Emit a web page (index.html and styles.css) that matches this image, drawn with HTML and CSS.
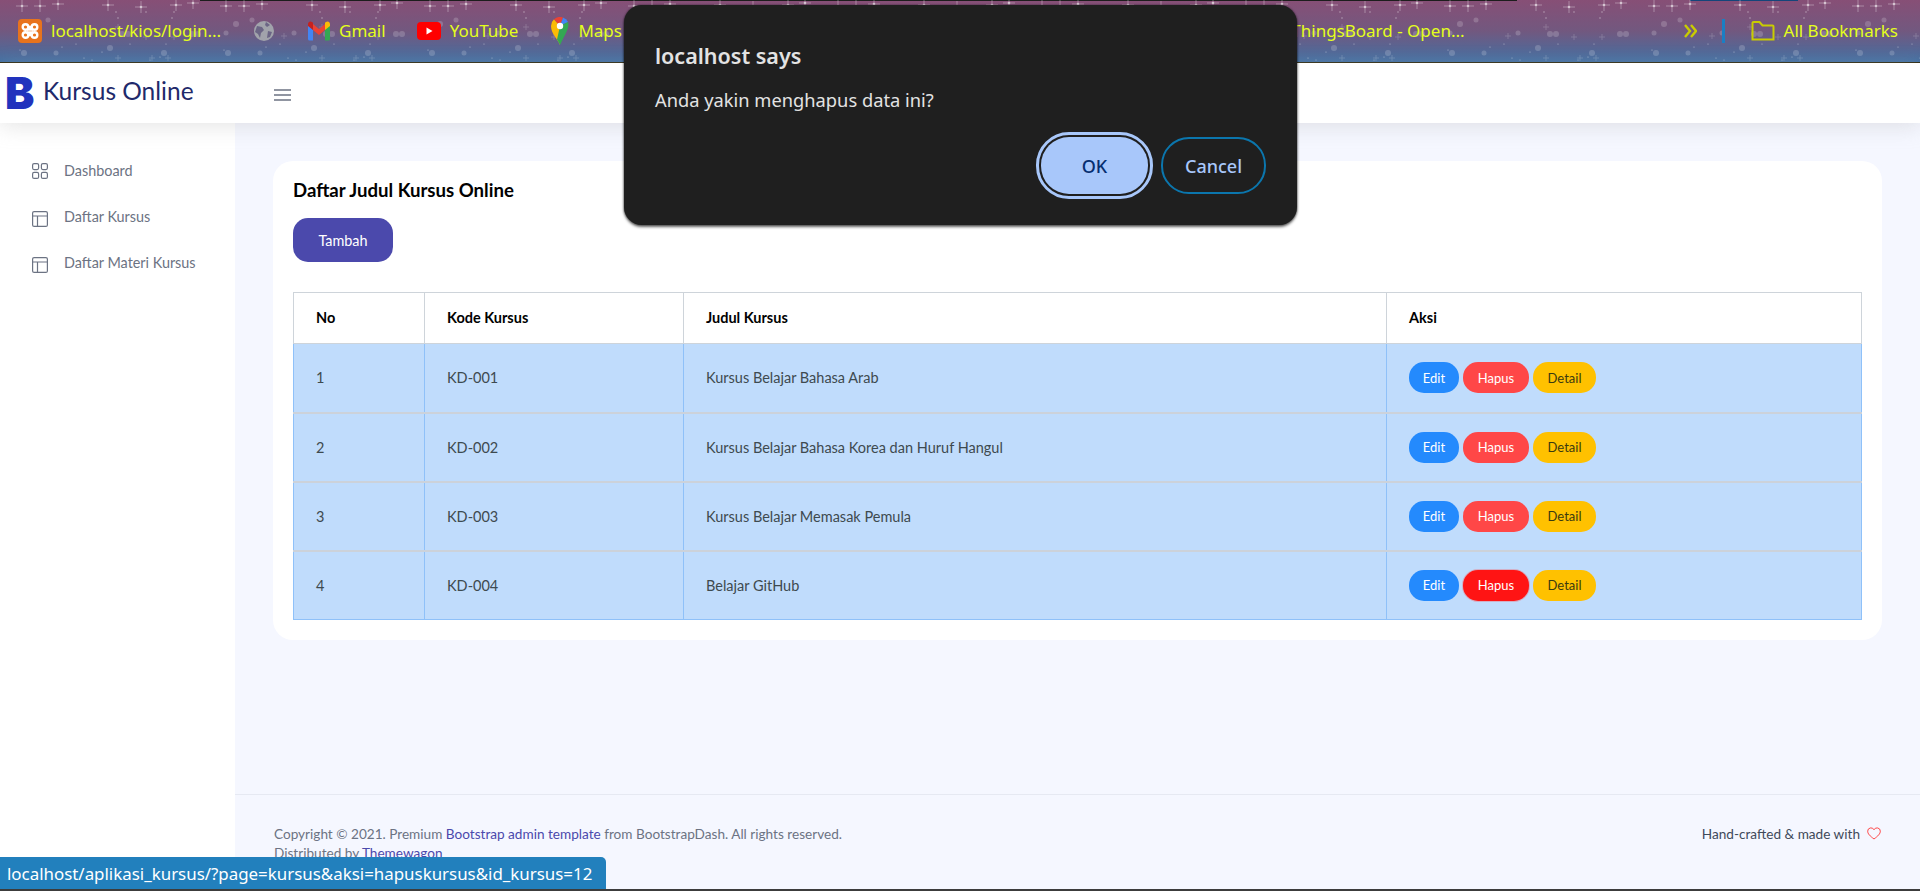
FILE: index.html
```html
<!DOCTYPE html>
<html lang="en">
<head>
    <meta charset="UTF-8">
    <title>Kursus Online</title>
    <link rel="stylesheet" href="styles.css">
</head>
<body>
    <!-- Browser bookmarks bar -->
    <div class="bookmarks">
        <svg class="stars" width="100%" height="62" aria-hidden="true">
            <defs>
                <g id="spark"><path d="M-6 0H6M0-6V6" stroke="#fff" stroke-width=".8" opacity=".4"/><circle r="1.3" fill="#fff" opacity=".55"/></g>
                <g id="plus"><path d="M-3 0H3M0-3V3" stroke="#fff" stroke-width=".8" opacity=".2"/></g>
                <pattern id="tile" width="204" height="62" patternUnits="userSpaceOnUse">
                    <use href="#spark" x="22" y="6"/><use href="#spark" x="40" y="6"/><use href="#spark" x="58" y="4"/>
                    <use href="#spark" x="108" y="5"/><use href="#spark" x="141" y="7"/><use href="#spark" x="176" y="5"/><use href="#spark" x="193" y="3"/>
                    <g fill="#fff" opacity=".5">
                        <circle cx="116" cy="12" r=".7"/><circle cx="146" cy="12" r=".7"/><circle cx="174" cy="12" r=".7"/><circle cx="118" cy="18" r=".7"/><circle cx="172" cy="18" r=".7"/>
                        <circle cx="20" cy="50" r=".6"/><circle cx="62" cy="47" r=".6"/><circle cx="76" cy="44" r=".6"/><circle cx="102" cy="52" r=".6"/><circle cx="130" cy="44" r=".6"/><circle cx="166" cy="44" r=".6"/>
                        <circle cx="84" cy="58" r=".6"/><circle cx="92" cy="60" r=".6"/><circle cx="150" cy="60" r=".6"/><circle cx="160" cy="57" r=".6"/>
                    </g>
                    <g fill="#fff" opacity=".18">
                        <circle cx="32" cy="24" r="3"/><circle cx="48" cy="20" r="2.5"/><circle cx="22" cy="33" r="2.5"/><circle cx="90" cy="33" r="2.5"/><circle cx="122" cy="34" r="3"/><circle cx="128" cy="34" r="3"/>
                        <circle cx="192" cy="34" r="3"/><circle cx="198" cy="34" r="3"/><circle cx="24" cy="53" r="3"/><circle cx="56" cy="53" r="2.5"/><circle cx="110" cy="48" r="3"/><circle cx="164" cy="53" r="3"/>
                    </g>
                    <use href="#plus" x="80" y="36"/><use href="#plus" x="146" y="37"/><use href="#plus" x="174" y="37"/><use href="#plus" x="118" y="27"/>
                    <use href="#plus" x="118" y="58"/><use href="#plus" x="152" y="58"/><use href="#plus" x="168" y="58"/>
                </pattern>
            </defs>
            <rect width="100%" height="62" fill="url(#tile)"/>
        </svg>
        <div class="bm bm-first">
            <svg class="bm-icon" width="24" height="24" viewBox="0 0 24 24"><rect width="24" height="24" rx="4" fill="#e8731d"/><g fill="none" stroke="#fff" stroke-width="2.400"><circle cx="7.500" cy="8" r="2.800"/><circle cx="16.500" cy="8" r="2.800"/><circle cx="7.500" cy="16" r="2.800"/><circle cx="16.500" cy="16" r="2.800"/><path d="M9 10.500h6M9 13.500h6M10 8h4M10 16h4"/></g></svg>
            <span>localhost/kios/login...</span>
        </div>
        <div class="bm bm-globe">
            <svg width="22" height="22" viewBox="0 0 22 22"><circle cx="11" cy="11" r="10" fill="#a1a3ab"/><path d="M4 6l5 1 2 3-3 3-1 5-2-4-3-2zM13 2l4 3-3 2-2-2zM15 11l4 1-2 5-3 1z" fill="#6b6585"/></svg>
        </div>
        <div class="bm bm-gmail">
            <svg class="bm-icon" width="22" height="20" viewBox="0 0 22 20"><path d="M0 3v15a1.500 1.500 0 0 0 1.500 1.500H5V9z" fill="#4285f4"/><path d="M22 3v15a1.500 1.500 0 0 1-1.500 1.500H17V9z" fill="#34a853"/><path d="M5 3l6 5 6-5v6l-6 5-6-5z" fill="#ea4335"/><path d="M0 3a2.500 2.500 0 0 1 4-2l1 .8V9L0 5z" fill="#c5221f"/><path d="M22 3a2.500 2.500 0 0 0-4-2l-1 .8V9l5-4z" fill="#fbbc04"/></svg>
            <span>Gmail</span>
        </div>
        <div class="bm bm-yt">
            <svg class="bm-icon" width="24" height="18" viewBox="0 0 24 18"><rect width="24" height="18" rx="4" fill="#f00"/><path d="M9.500 5.500l6 3.500-6 3.500z" fill="#fff"/></svg>
            <span>YouTube</span>
        </div>
        <div class="bm bm-maps">
            <svg class="bm-icon" width="18" height="28" viewBox="0 0 18 28"><path d="M9 28C7 22 0 17 0 9a9 9 0 0 1 3-6.700l6 7z" fill="#fbbc04"/><path d="M3 2.300A9 9 0 0 1 12 .5L9 9z" fill="#ea4335"/><path d="M12 .5A9 9 0 0 1 17 5l-8 4z" fill="#4285f4"/><path d="M17 5c1.500 5-1 9-8 23-.7-2-1.800-3.800-3-5.600L9 9z" fill="#34a853"/><circle cx="9" cy="9" r="3.200" fill="#fff"/></svg>
            <span>Maps</span>
        </div>
        <div class="bm bm-things"><span>ThingsBoard - Open...</span></div>
        <svg class="chevrons" width="13" height="14" viewBox="0 0 13 14"><path d="M1 1l5 6-5 6M7 1l5 6-5 6" fill="none" stroke="#c9cc00" stroke-width="2.400"/></svg>
        <div class="bm-divider"></div>
        <div class="bm bm-all">
            <svg class="bm-icon" width="24" height="20" viewBox="0 0 24 20"><path d="M1.500 18.500V2a1 1 0 0 1 1-1h6l3 3.500h10a1 1 0 0 1 1 1v13z" fill="none" stroke="#c9cc00" stroke-width="2"/></svg>
            <span>All Bookmarks</span>
        </div>
    </div>

    <!-- Top navbar -->
    <nav class="navbar">
        <div class="brand">
            <span class="brand-logo">B</span>
            <span class="brand-name">Kursus Online</span>
        </div>
        <svg class="hamburger" width="17" height="14" viewBox="0 0 17 14"><path d="M0 2h17M0 7h17M0 12h17" stroke="#6c7383" stroke-width="1.700"/></svg>
    </nav>

    <div class="page">
        <aside class="sidebar">
            <a class="side-link">
                <svg width="16" height="16" viewBox="0 0 16 16" fill="none" stroke="#6c7383" stroke-width="1.200"><rect x=".6" y=".6" width="6" height="6" rx="1.500"/><rect x="9.400" y=".6" width="6" height="6" rx="1.500"/><rect x=".6" y="9.400" width="6" height="6" rx="1.500"/><rect x="9.400" y="9.400" width="6" height="6" rx="1.500"/></svg>
                <span>Dashboard</span>
            </a>
            <a class="side-link">
                <svg class="icon-low" width="16" height="16" viewBox="0 0 16 16" fill="none" stroke="#6c7383" stroke-width="1.200"><rect x=".6" y=".6" width="14.800" height="14.800" rx="1.500"/><path d="M.6 5h14.800M5.500 5v10.400"/></svg>
                <span>Daftar Kursus</span>
            </a>
            <a class="side-link">
                <svg class="icon-low" width="16" height="16" viewBox="0 0 16 16" fill="none" stroke="#6c7383" stroke-width="1.200"><rect x=".6" y=".6" width="14.800" height="14.800" rx="1.500"/><path d="M.6 5h14.800M5.500 5v10.400"/></svg>
                <span>Daftar Materi Kursus</span>
            </a>
        </aside>

        <main class="main">
            <div class="content">
                <div class="card">
                    <h4 class="card-title">Daftar Judul Kursus Online</h4>
                    <button class="btn-tambah">Tambah</button>
                    <table class="data-table">
                        <colgroup>
                            <col class="col-no"><col class="col-kode"><col class="col-judul"><col>
                        </colgroup>
                        <thead>
                            <tr><th>No</th><th>Kode Kursus</th><th>Judul Kursus</th><th>Aksi</th></tr>
                        </thead>
                        <tbody>
                            <tr>
                                <td>1</td><td>KD-001</td><td>Kursus Belajar Bahasa Arab</td>
                                <td><div class="actions"><a class="pill pill-edit">Edit</a><a class="pill pill-hapus">Hapus</a><a class="pill pill-detail">Detail</a></div></td>
                            </tr>
                            <tr>
                                <td>2</td><td>KD-002</td><td>Kursus Belajar Bahasa Korea dan Huruf Hangul</td>
                                <td><div class="actions"><a class="pill pill-edit">Edit</a><a class="pill pill-hapus">Hapus</a><a class="pill pill-detail">Detail</a></div></td>
                            </tr>
                            <tr>
                                <td>3</td><td>KD-003</td><td>Kursus Belajar Memasak Pemula</td>
                                <td><div class="actions"><a class="pill pill-edit">Edit</a><a class="pill pill-hapus">Hapus</a><a class="pill pill-detail">Detail</a></div></td>
                            </tr>
                            <tr>
                                <td>4</td><td>KD-004</td><td>Belajar GitHub</td>
                                <td><div class="actions"><a class="pill pill-edit">Edit</a><a class="pill pill-hapus pill-hover">Hapus</a><a class="pill pill-detail">Detail</a></div></td>
                            </tr>
                        </tbody>
                    </table>
                </div>
            </div>

            <footer class="footer">
                <div class="copyright">
                    Copyright © 2021. Premium <a>Bootstrap admin template</a> from BootstrapDash. All rights reserved.<br>
                    Distributed by <a>Themewagon</a>
                </div>
                <div class="crafted">
                    Hand-crafted &amp; made with
                    <svg width="14" height="13" viewBox="0 0 14 13"><path d="M7 12C3 9 .7 6.800 .7 4.200A3.300 3.300 0 0 1 7 2.800a3.300 3.300 0 0 1 6.300 1.400C13.300 6.800 11 9 7 12z" fill="none" stroke="#ff4747" stroke-width="1"/></svg>
                </div>
            </footer>
        </main>
    </div>

    <!-- Browser confirm dialog -->
    <div class="dialog">
        <div class="dialog-title">localhost says</div>
        <div class="dialog-msg">Anda yakin menghapus data ini?</div>
        <div class="dialog-btns">
            <button class="dlg-ok">OK</button>
            <button class="dlg-cancel">Cancel</button>
        </div>
    </div>

    <!-- Link preview at bottom of the window -->
    <div class="status">localhost/aplikasi_kursus/?page=kursus&amp;aksi=hapuskursus&amp;id_kursus=12</div>
</body>
</html>
```

FILE: styles.css
```css
* {
    box-sizing: border-box;
}

body {
    margin: 0;
    height: 891px;
    overflow: hidden;
    display: flex;
    flex-direction: column;
    font-family: Lato, 'Open Sans', sans-serif;
    background-color: #f5f7ff;
    border-bottom: 2px solid #3c3c3c;
}

/* Browser bookmarks bar */
.bookmarks {
    height: 63px;
    flex-shrink: 0;
    display: flex;
    align-items: center;
    padding: 0 22px 1px 18px;
    background: linear-gradient(to bottom, #874f76, #72587f 50%, #4270a3);
    border-bottom: 1px solid #2e2a10;
    color: #e4ff1c;
    font-family: 'Noto Sans', sans-serif;
    font-size: 17px;
    position: relative;
}

/* bottom edge of the tab strip above */
.bookmarks::before {
    content: "";
    position: absolute;
    left: 0;
    top: 0;
    width: 100%;
    height: 1px;
    background: linear-gradient(to right, transparent 200px, #1d1d1d 200px, #1d1d1d 1517px, transparent 1517px, transparent 1690px, #14457a 1690px, #14457a 1798px, transparent 1798px);
}

.stars {
    position: absolute;
    left: 0;
    top: 0;
}

.bm {
    display: flex;
    align-items: center;
    position: relative;
    white-space: nowrap;
}

.bm-icon {
    margin-right: 9px;
    flex-shrink: 0;
}

.bm-globe {
    margin-left: 32px;
}

.bm-gmail {
    margin-left: 33px;
}

.bm-yt {
    margin-left: 31px;
}

.bm-maps {
    margin-left: 33px;
}

.bm-things {
    margin-left: auto;
}

.chevrons {
    margin-left: 219px;
    position: relative;
}

.bm-divider {
    width: 3px;
    height: 24px;
    margin-left: 25px;
    background-color: #1a7fc4;
    position: relative;
}

.bm-all {
    margin-left: 26px;
}

/* Navbar */
.navbar {
    height: 60px;
    flex-shrink: 0;
    display: flex;
    align-items: center;
    background-color: #fff;
    box-shadow: 0 4px 20px rgba(182, 182, 182, 0.35);
    position: relative;
}

.brand {
    width: 274px;
    display: flex;
    align-items: center;
    padding-left: 5px;
}

.brand-logo {
    font-family: Inter, sans-serif;
    font-weight: 900;
    font-size: 44px;
    line-height: 60px;
    width: 38px;
    color: #2133bd;
}

.brand-name {
    font-size: 24.5px;
    color: #1f2a6b;
    margin-top: -6px;
}

.hamburger {
    margin-top: 4px;
}

/* Sidebar and main area */
.page {
    flex: 1;
    display: flex;
    min-height: 0;
}

.sidebar {
    width: 235px;
    flex-shrink: 0;
    background-color: #fff;
    padding: 36px 0 0 32px;
}

.side-link {
    display: flex;
    align-items: center;
    gap: 16px;
    height: 22px;
    margin-bottom: 24px;
    font-size: 14.4px;
    color: #6c7383;
}

.side-link svg {
    flex-shrink: 0;
    margin-top: 2px;
}

.side-link .icon-low {
    margin-top: 6px;
}

.main {
    flex: 1;
    display: flex;
    flex-direction: column;
    min-width: 0;
}

.content {
    flex: 1;
    padding: 38px 38px 0 38px;
}

.card {
    background-color: #fff;
    border-radius: 20px;
    padding: 19px 20px 20px 20px;
}

.card-title {
    margin: 0 0 18px;
    font-size: 18.6px;
    line-height: 20px;
    font-weight: 700;
    color: #010101;
}

.btn-tambah {
    display: block;
    width: 100px;
    height: 44px;
    border: none;
    border-radius: 15px;
    background-color: #4b49ac;
    color: #fff;
    font-family: inherit;
    font-size: 14.4px;
    margin-bottom: 30px;
}

/* Table */
.data-table {
    width: 1569px;
    table-layout: fixed;
    border-collapse: collapse;
    font-size: 14.5px;
}

.col-no {
    width: 131px;
}

.col-kode {
    width: 259px;
}

.col-judul {
    width: 703px;
}

.data-table th {
    height: 51px;
    padding: 0 22px 1px;
    text-align: left;
    font-weight: 700;
    color: #010101;
    background-color: #fff;
    border: 1.5px solid #ced4da;
}

.data-table td {
    height: 69px;
    padding: 0 22px;
    color: #3e4a4f;
    background-color: #c0dcfc;
    border-left: 1px solid #8fc1f9;
    border-right: 1px solid #8fc1f9;
    border-bottom: 2px solid #ccd2da;
}

.data-table tbody tr:last-child td {
    border-bottom: 1.5px solid #8fc1f9;
}

.actions {
    display: flex;
    gap: 4px;
}

.pill {
    height: 31px;
    display: flex;
    align-items: center;
    justify-content: center;
    border-radius: 15px;
    font-size: 13px;
    color: #fff;
}

.pill-edit {
    width: 50px;
    background-color: #248afd;
}

.pill-hapus {
    width: 66px;
    background-color: #ff4747;
}

.pill-hover {
    background-color: #ff1414;
    box-shadow: 0 0 0 1px rgba(255, 71, 71, 0.3);
}

.pill-detail {
    width: 63px;
    background-color: #ffc100;
    color: #3a3a10;
}

/* Footer */
.footer {
    height: 95px;
    flex-shrink: 0;
    display: flex;
    justify-content: space-between;
    padding: 30px 39px 0 39px;
    border-top: 1px solid #e6e9f2;
    font-size: 13.6px;
    line-height: 19px;
    color: #6c7383;
}

.footer a {
    color: #4b49ac;
}

.crafted {
    display: flex;
    align-items: flex-start;
    gap: 7px;
    height: 19px;
    color: #3f4a5a;
}

.crafted svg {
    margin-top: 2px;
}

/* Browser confirm dialog */
.dialog {
    position: absolute;
    left: 624px;
    top: 5px;
    width: 673px;
    height: 220px;
    padding: 37px 31px 0;
    border-radius: 18px;
    background-color: #1f1f1f;
    box-shadow: 0 2px 3px rgba(0, 0, 0, 0.6), 0 0 2px rgba(0, 0, 0, 0.6);
    color: #e3e3e3;
    font-family: 'Noto Sans', sans-serif;
}

.dialog-title {
    font-size: 21.5px;
    line-height: 28px;
    font-weight: 600;
}

.dialog-msg {
    margin-top: 18px;
    font-size: 18.3px;
    line-height: 24px;
}

.dialog-btns {
    display: flex;
    justify-content: flex-end;
    align-items: center;
    gap: 13px;
    margin-top: 25px;
}

.dialog-btns button {
    font-family: inherit;
    font-size: 18px;
    font-weight: 500;
    border-radius: 28px;
}

.dlg-ok {
    width: 107px;
    height: 57px;
    border: none;
    background-color: #a8c7fa;
    color: #062e6f;
    outline: 3px solid #a8c7fa;
    outline-offset: 2px;
}

.dlg-cancel {
    width: 105px;
    height: 57px;
    border: 2px solid #0b76ad;
    background-color: transparent;
    color: #a8c7fa;
}

/* Status bubble */
.status {
    position: absolute;
    left: 0;
    top: 857px;
    width: 606px;
    height: 32px;
    padding: 2px 0 0 7px;
    border-top-right-radius: 5px;
    background-color: #2280bd;
    color: #fff;
    font-family: 'Noto Sans', sans-serif;
    font-size: 16.9px;
    line-height: 30px;
    white-space: nowrap;
}
```
